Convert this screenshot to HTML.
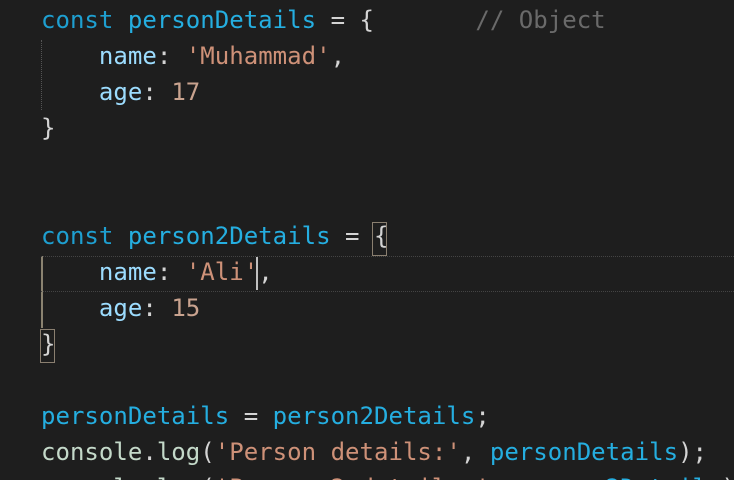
<!DOCTYPE html><html style="overflow:hidden;height:480px"><head><style>
body{margin:0;width:734px;height:480px;background:#1e1e1e;overflow:hidden;position:relative}
.c{position:absolute;left:41px;top:2px;height:478px;overflow:hidden;font-family:"DejaVu Sans Mono","Liberation Mono",monospace;font-size:24.05px;line-height:36px;white-space:pre;color:#d4d4d4}
.k{color:#1e9fd0}.v{color:#25aee0}.p{color:#9cdcfe}.s{color:#ce9178}.n{color:#c9a38f}.cm{color:#6a6a6a}.f{color:#c4d9c9}
.g{position:absolute;left:41px;width:1px}
.bx{position:absolute;border:1px solid #8a7f70;}
</style></head><body>
<div class="g" style="top:40px;height:70px;border-left:1px dotted #555"></div>
<div class="g" style="top:256px;height:72px;background:#8a8270;width:2px"></div>
<div style="position:absolute;left:41px;right:0;top:256px;border-top:1px dotted #444"></div>
<div style="position:absolute;left:41px;right:0;top:291px;border-top:1px dotted #444"></div>
<div class="bx" style="left:372px;top:222px;width:13px;height:32px"></div>
<div class="bx" style="left:40px;top:329px;width:13px;height:32px"></div>
<div style="position:absolute;left:256px;top:257px;width:2px;height:33px;background:#c0c0c0"></div>
<div class="c"><span class="k">const</span> <span class="v">personDetails</span> = {       <span class="cm">// Object</span>
    <span class="p">name</span>: <span class="s">'Muhammad'</span>,
    <span class="p">age</span>: <span class="n">17</span>
}


<span class="k">const</span> <span class="v">person2Details</span> = {
    <span class="p">name</span>: <span class="s">'Ali'</span>,
    <span class="p">age</span>: <span class="n">15</span>
}

<span class="v">personDetails</span> = <span class="v">person2Details</span>;
<span class="f">console</span>.<span class="f">log</span>(<span class="s">'Person details:'</span>, <span class="v">personDetails</span>);
<span class="f">console</span>.<span class="f">log</span>(<span class="s">'Person 2 details:'</span>, <span class="v">person2Details</span>);</div>
</body></html>
